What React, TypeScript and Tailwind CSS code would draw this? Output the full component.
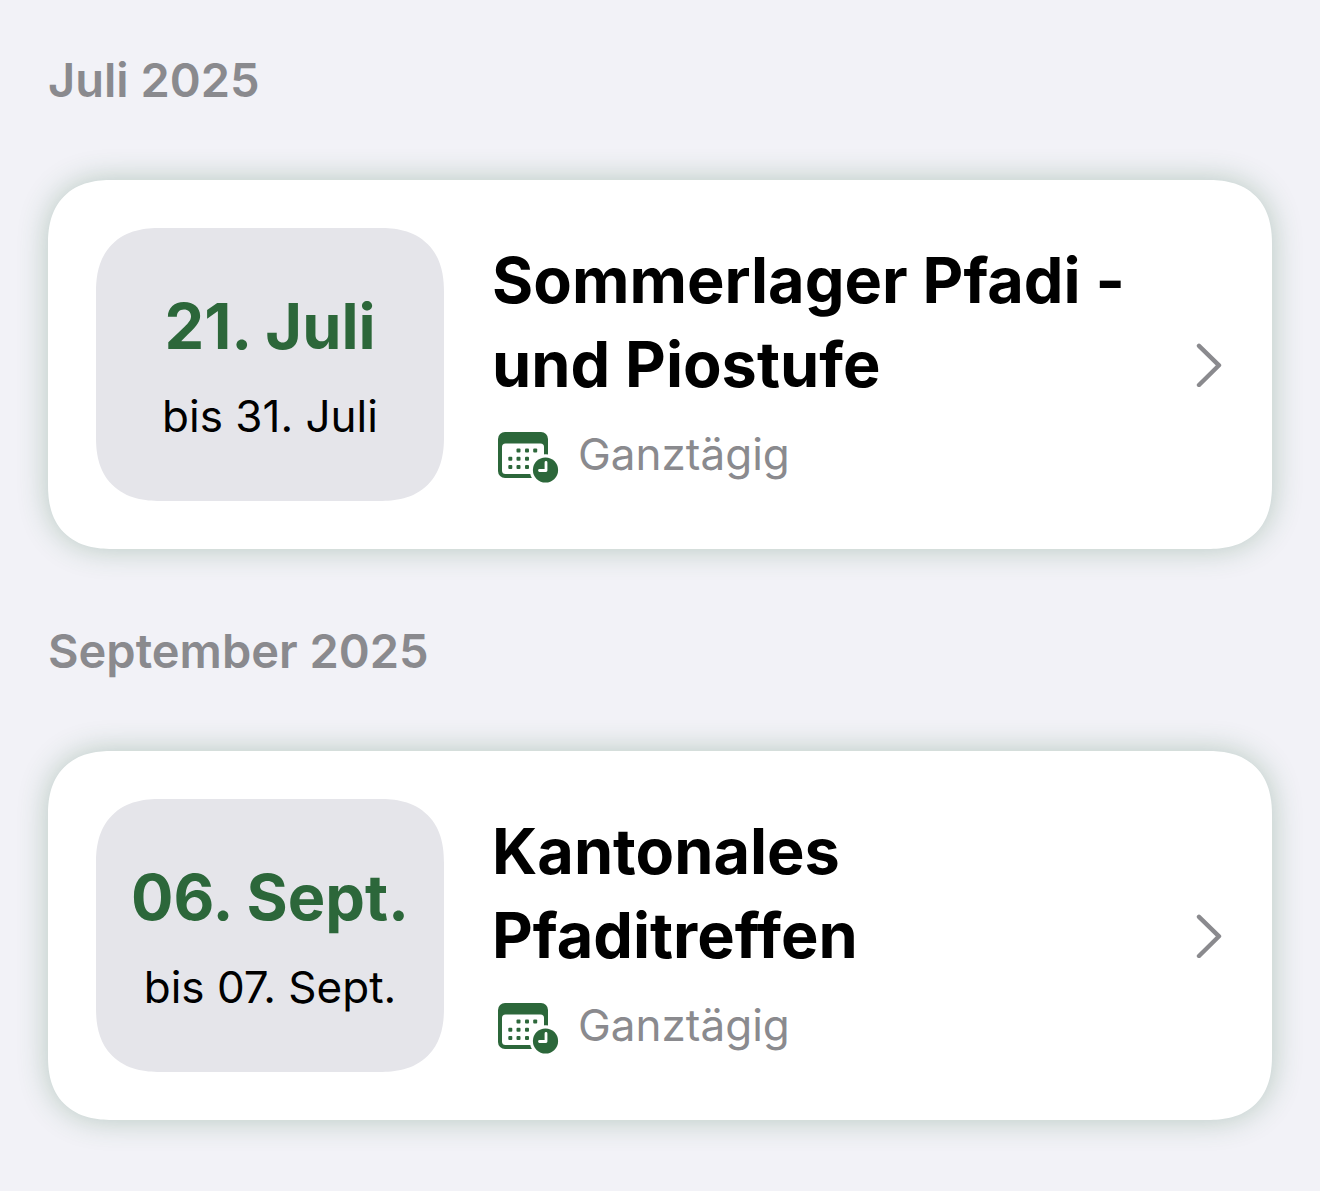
type CalendarEvent = {
  start: string;
  end: string;
  title: string;
  time: string;
};

type Month = {
  label: string;
  events: CalendarEvent[];
};

const months: Month[] = [
  {
    label: "Juli 2025",
    events: [
      {
        start: "21. Juli",
        end: "bis 31. Juli",
        title: "Sommerlager Pfadi - und Piostufe",
        time: "Ganztägig",
      },
    ],
  },
  {
    label: "September 2025",
    events: [
      {
        start: "06. Sept.",
        end: "bis 07. Sept.",
        title: "Kantonales Pfaditreffen",
        time: "Ganztägig",
      },
    ],
  },
];

const dots = [
  [20.5, 18.5],
  [29, 18.5],
  [37.2, 18.5],
  [12.3, 26.8],
  [20.5, 26.8],
  [29, 26.8],
  [12.3, 35],
  [20.5, 35],
  [29, 35],
];

function CalendarClockIcon() {
  return (
    <svg width="62" height="60" viewBox="0 -8 62 60" aria-hidden="true" className="shrink-0">
      <rect x="0" y="0" width="50" height="46" rx="7" fill="#2c673a" />
      <rect x="4" y="11.5" width="42" height="30.5" rx="3.5" fill="#fff" />
      {dots.map(([x, y]) => (
        <rect key={`${x}-${y}`} x={x - 2} y={y - 2} width="4" height="4" rx="1" fill="#2c673a" />
      ))}
      <circle cx="47.5" cy="38" r="15.8" fill="#fff" />
      <circle cx="47.5" cy="38" r="12.6" fill="#2c673a" />
      <path
        d="M48 30.5V38.5H41.5"
        fill="none"
        stroke="#fff"
        strokeWidth="2.8"
        strokeLinecap="round"
        strokeLinejoin="round"
      />
    </svg>
  );
}

function Chevron() {
  return (
    <svg width="28" height="44" viewBox="0 0 28 44" aria-hidden="true" className="shrink-0">
      <path
        d="M3 2.8L23 22.3L3 42"
        fill="none"
        stroke="#8a8a8e"
        strokeWidth="4.4"
        strokeLinecap="round"
        strokeLinejoin="round"
      />
    </svg>
  );
}

function EventCard({ event }: { event: CalendarEvent }) {
  return (
    <a
      href="#"
      className="flex items-center gap-12 rounded-[64px] bg-white p-12 shadow-[0_0_30px_rgba(44,103,58,0.3)] [corner-shape:superellipse(1.25)]"
    >
      <div className="flex w-[348px] shrink-0 flex-col items-center gap-3 rounded-[64px] bg-[#e5e5ea] pt-14 pb-12 text-center [corner-shape:superellipse(1.25)]">
        <p className="text-[63px] leading-[84px] font-bold text-[#2c673a]">{event.start}</p>
        <p className="text-[44px] leading-[73px] text-black">{event.end}</p>
      </div>
      <div className="flex min-w-0 flex-1 flex-col gap-3 pb-0.5">
        <h3 className="text-[63px] leading-[84px] font-bold text-black">{event.title}</h3>
        <div className="flex items-center gap-[18px] pl-1.5">
          <CalendarClockIcon />
          <span className="text-[44px] leading-[72px] text-[#8a8a8e]">{event.time}</span>
        </div>
      </div>
      <Chevron />
    </a>
  );
}

export default function App() {
  return (
    <main className="min-h-screen bg-[#f2f2f7] px-12 pt-12 pb-[71px] font-['Inter','Liberation_Sans',sans-serif]">
      <div className="flex flex-col gap-[70px]">
        {months.map((month) => (
          <section key={month.label} className="flex flex-col gap-[68px]">
            <h2 className="text-[47px] leading-[64px] font-semibold text-[#8a8a8e]">{month.label}</h2>
            {month.events.map((event) => (
              <EventCard key={event.title} event={event} />
            ))}
          </section>
        ))}
      </div>
    </main>
  );
}
